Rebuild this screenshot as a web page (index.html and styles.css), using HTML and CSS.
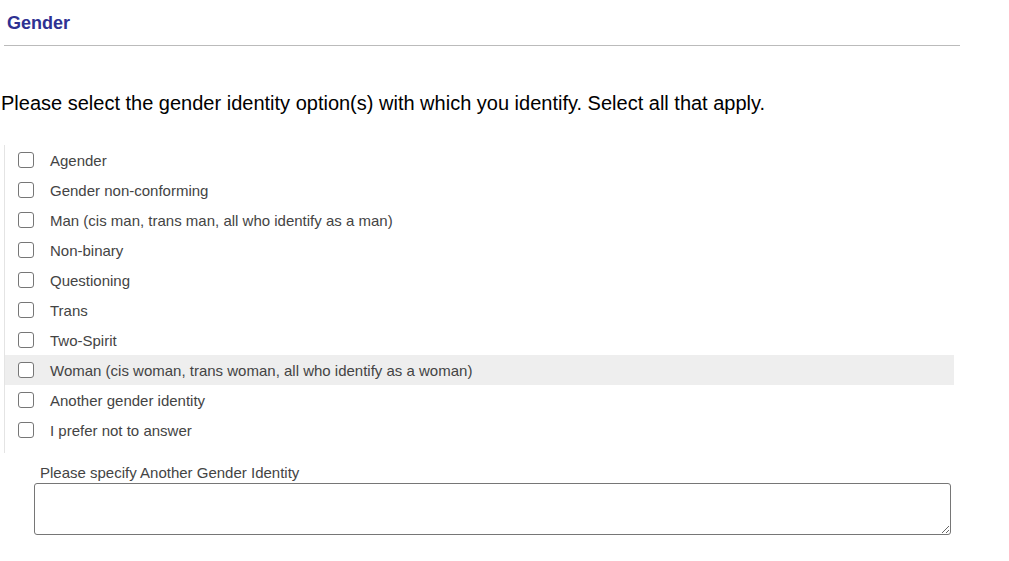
FILE: index.html
```html
<!DOCTYPE html>
<html lang="en">
<head>
    <meta charset="UTF-8">
    <meta name="viewport" content="width=device-width, initial-scale=1.0">
    <title>Gender</title>
    <link rel="stylesheet" href="styles.css">
</head>
<body>
    <div class="section">
        <h2 class="section-title">Gender</h2>
    </div>

    <p class="question">Please select the gender identity option(s) with which you identify. Select all that apply.</p>

    <div class="options">
        <label class="option"><input type="checkbox"> <span>Agender</span></label>
        <label class="option"><input type="checkbox"> <span>Gender non-conforming</span></label>
        <label class="option"><input type="checkbox"> <span>Man (cis man, trans man, all who identify as a man)</span></label>
        <label class="option"><input type="checkbox"> <span>Non-binary</span></label>
        <label class="option"><input type="checkbox"> <span>Questioning</span></label>
        <label class="option"><input type="checkbox"> <span>Trans</span></label>
        <label class="option"><input type="checkbox"> <span>Two-Spirit</span></label>
        <label class="option hover"><input type="checkbox"> <span>Woman (cis woman, trans woman, all who identify as a woman)</span></label>
        <label class="option"><input type="checkbox"> <span>Another gender identity</span></label>
        <label class="option"><input type="checkbox"> <span>I prefer not to answer</span></label>
    </div>

    <div class="specify">
        <label for="other-gender">Please specify Another Gender Identity</label>
        <textarea id="other-gender"></textarea>
    </div>
</body>
</html>
```

FILE: styles.css
```css
body {
    font-family: "Liberation Sans", Arial, sans-serif;
    margin: 0;
    background-color: #fff;
    color: #000;
}

.section {
    width: 953px;
    margin-left: 4px;
    border-bottom: 1px solid #bbb;
    padding: 12px 0 11px 3px;
}

.section-title {
    margin: 0;
    font-size: 18px;
    line-height: 22px;
    color: #2e3192;
}

.question {
    margin: 45px 0 0 1px;
    font-size: 20px;
    line-height: 24px;
}

.options {
    margin: 30px 0 0 4px;
    padding-bottom: 8px;
    width: 949px;
    border-left: 1px solid #e4e4e4;
}

.option {
    display: flex;
    align-items: center;
    height: 30px;
    padding-left: 13px;
    font-size: 15px;
    color: #444;
    cursor: pointer;
}

.option:hover,
.option.hover {
    background-color: #eee;
}

.option input {
    appearance: none;
    -webkit-appearance: none;
    box-sizing: border-box;
    margin: 0 16px 0 0;
    width: 16px;
    height: 16px;
    border: 1px solid #767676;
    border-radius: 3px;
    background-color: #fff;
}

.specify {
    margin: 10px 0 0 34px;
    width: 917px;
}

.specify label {
    display: block;
    padding-left: 6px;
    font-size: 15px;
    color: #444;
    line-height: 20px;
}

.specify textarea {
    display: block;
    box-sizing: border-box;
    width: 100%;
    height: 52px;
    margin-top: 0;
    border: 1px solid #767676;
    border-radius: 3px;
    font-family: inherit;
    font-size: 15px;
}
```
